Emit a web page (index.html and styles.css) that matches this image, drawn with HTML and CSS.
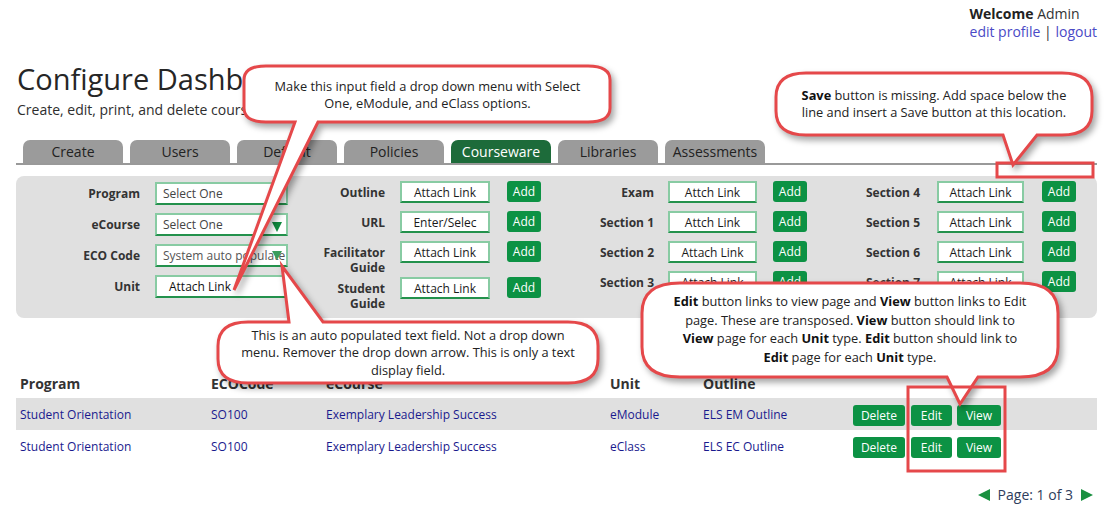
FILE: index.html
```html
<!DOCTYPE html>
<html lang="en">
<head>
<meta charset="utf-8">
<title>Configure Dashboard</title>
<link rel="stylesheet" href="styles.css">
</head>
<body>
<div class="page">
  <header class="topbar">
    <div class="welcome">
      <div><b>Welcome</b> Admin</div>
      <div><a class="toplink" href="#">edit profile</a> | <a class="toplink" href="#">logout</a></div>
    </div>
  </header>

  <h1 class="title">Configure Dashboard</h1>
  <p class="subtitle">Create, edit, print, and delete courseware.</p>

  <nav class="tabs">
    <div class="tab">Create</div>
    <div class="tab">Users</div>
    <div class="tab">Default</div>
    <div class="tab">Policies</div>
    <div class="tab active">Courseware</div>
    <div class="tab">Libraries</div>
    <div class="tab">Assessments</div>
  </nav>

  <section class="panel">
    <div class="group g1">
      <div class="lbl">Program</div>
      <div class="inp left">Select One</div>
      <div class="lbl">eCourse</div>
      <div class="inp left">Select One<span class="caret"></span></div>
      <div class="lbl">ECO Code</div>
      <div class="inp left muted">System auto populate<span class="caret light"></span></div>
      <div class="lbl">Unit</div>
      <div class="inp left unit">Attach Link</div>
    </div>

    <div class="group g2">
      <div class="lbl">Outline</div>
      <div class="inp">Attach Link</div>
      <div class="btn add">Add</div>
      <div class="lbl">URL</div>
      <div class="inp">Enter/Selec</div>
      <div class="btn add">Add</div>
      <div class="lbl">Facilitator<br>Guide</div>
      <div class="inp">Attach Link</div>
      <div class="btn add">Add</div>
      <div class="lbl">Student<br>Guide</div>
      <div class="inp">Attach Link</div>
      <div class="btn add">Add</div>
    </div>

    <div class="group g3">
      <div class="lbl">Exam</div>
      <div class="inp">Attch Link</div>
      <div class="btn add">Add</div>
      <div class="lbl">Section 1</div>
      <div class="inp">Attch Link</div>
      <div class="btn add">Add</div>
      <div class="lbl">Section 2</div>
      <div class="inp">Attach Link</div>
      <div class="btn add">Add</div>
      <div class="lbl">Section 3</div>
      <div class="inp">Attach Link</div>
      <div class="btn add">Add</div>
    </div>

    <div class="group g4">
      <div class="lbl">Section 4</div>
      <div class="inp">Attach Link</div>
      <div class="btn add">Add</div>
      <div class="lbl">Section 5</div>
      <div class="inp">Attach Link</div>
      <div class="btn add">Add</div>
      <div class="lbl">Section 6</div>
      <div class="inp">Attach Link</div>
      <div class="btn add">Add</div>
      <div class="lbl">Section 7</div>
      <div class="inp">Attach Link</div>
      <div class="btn add">Add</div>
    </div>
  </section>

  <div class="list">
    <div class="row head">
      <div>Program</div><div>ECOCode</div><div>eCourse</div><div>Unit</div><div>Outline</div><div></div>
    </div>
    <div class="row item alt">
      <a href="#">Student Orientation</a><a href="#">SO100</a><a href="#">Exemplary Leadership Success</a><a href="#">eModule</a><a href="#">ELS EM Outline</a>
      <div class="actions"><div class="btn del">Delete</div><div class="btn edit">Edit</div><div class="btn view">View</div></div>
    </div>
    <div class="row item">
      <a href="#">Student Orientation</a><a href="#">SO100</a><a href="#">Exemplary Leadership Success</a><a href="#">eClass</a><a href="#">ELS EC Outline</a>
      <div class="actions"><div class="btn del">Delete</div><div class="btn edit">Edit</div><div class="btn view">View</div></div>
    </div>
  </div>

  <div class="pager">
    <span class="tri-left"></span>
    <span>Page: 1 of 3</span>
    <span class="tri-right"></span>
  </div>
</div>

<div class="overlay">
  <svg class="marks" width="1119" height="525" viewBox="0 0 1119 525">
    <path class="bubble" d="M266,66 H588 Q610,66 610,80 V108 Q610,122 588,122 H318 L234,290 L295,122 H266 Q244,122 244,108 V80 Q244,66 266,66 Z"/>
    <path class="bubble" d="M248,322 H289 L282,266 L323,322 H568 Q598,322 598,346 V359 Q598,383 568,383 H248 Q218,383 218,359 V346 Q218,322 248,322 Z"/>
    <path class="bubble" d="M806,73 H1062 Q1092,73 1092,97 V111 Q1092,135 1062,135 H1037 L1013,165 L1003,135 H806 Q776,135 776,111 V97 Q776,73 806,73 Z"/>
    <path class="bubble" d="M680,283 H1020 Q1058,283 1058,313 V347 Q1058,377 1020,377 H978 L960,404 L947,377 H680 Q642,377 642,347 V313 Q642,283 680,283 Z"/>
    <rect class="mark" x="997" y="163" width="96" height="14"/>
    <rect class="mark" x="908" y="387" width="97" height="84"/>
  </svg>
  <div class="note n1">Make this input field a drop down menu with Select<br>One, eModule, and eClass options.</div>
  <div class="note n2">This is an auto populated text field. Not a drop down<br>menu. Remover the drop down arrow. This is only a text<br>display field.</div>
  <div class="note n3"><span><b>Save</b> button is missing. Add space below the<br>line and insert a Save button at this location.</span></div>
  <div class="note n4"><span><b>Edit</b> button links to view page and <b>View</b> button links to Edit<br>page. These are transposed. <b>View</b> button should link to<br><b>View</b> page for each <b>Unit</b> type. <b>Edit</b> button should link to<br><b>Edit</b> page for each <b>Unit</b> type.</span></div>
</div>
</body>
</html>
```

FILE: styles.css
```css
* { box-sizing: border-box; }

body {
  margin: 0;
  width: 1119px;
  height: 525px;
  overflow: hidden;
  position: relative;
  background: #fff;
  color: #333;
  font-family: "Open Sans", "Liberation Sans", sans-serif;
}

.page {
  padding: 5px 22px 0 16px;
}

/* top bar */
.topbar {
  display: flex;
  justify-content: flex-end;
}
.welcome {
  font-size: 14px;
  line-height: 18px;
  color: #333;
}
.welcome b { color: #222; }
.toplink {
  color: #4a4ac6;
  text-decoration: none;
}

.title {
  margin: 21px 0 0 1px;
  font-size: 29px;
  line-height: 34px;
  font-weight: 400;
  color: #262626;
}
.subtitle {
  margin: 4px 0 0 1px;
  font-size: 14px;
  line-height: 20px;
  color: #2e2e2e;
}

/* tabs */
.tabs {
  margin-top: 20px;
  display: flex;
  gap: 7px;
  padding-left: 7px;
  border-bottom: 2px solid #999;
}
.tab {
  width: 100px;
  height: 23px;
  line-height: 23px;
  text-align: center;
  background: #9b9b9b;
  border-radius: 7px 7px 0 0;
  font-size: 14px;
  color: #222;
}
.tab.active {
  background: #1d6b3a;
  color: #fff;
}

/* form panel */
.panel {
  margin-top: 11px;
  background: #e0e0e0;
  border-radius: 8px;
  display: flex;
  align-items: flex-start;
  padding: 5px 0 13px;
}
.group {
  display: grid;
  row-gap: 8px;
  align-items: start;
}
.g1 {
  margin-top: 1px;
  grid-template-columns: 124px 133px;
  column-gap: 15px;
}
.g2 {
  margin-left: 17px;
  grid-template-columns: 80px 15px 90px 17px 34px;
}
.g3 {
  margin-left: 33px;
  grid-template-columns: 80px 14px 89px 16px 34px;
}
.g4 {
  margin-left: 33px;
  grid-template-columns: 80px 17px 87px 18px 34px;
}
.g2 .lbl, .g3 .lbl, .g4 .lbl { grid-column: 1; }
.g2 .inp, .g3 .inp, .g4 .inp { grid-column: 3; }
.g2 .add, .g3 .add, .g4 .add { grid-column: 5; }

.lbl {
  text-align: right;
  font-size: 12px;
  font-weight: 700;
  line-height: 15px;
  padding-top: 4px;
  margin-bottom: -6px;
  color: #333;
}

.inp {
  position: relative;
  height: 22px;
  display: flex;
  align-items: center;
  justify-content: center;
  overflow: hidden;
  white-space: nowrap;
  background: #fff;
  border: 2px solid #88cba3;
  border-bottom-color: #23914c;
  font-size: 12px;
  color: #1a1a1a;
}
.g1 .inp { height: 23px; }
.inp.left {
  justify-content: flex-start;
  padding-left: 6px;
  color: #444;
}
.inp.muted { color: #555; }
.inp.unit {
  padding-left: 12px;
  color: #111;
}
.caret {
  position: absolute;
  right: 4px;
  top: 7px;
  width: 0;
  height: 0;
  border-left: 5px solid transparent;
  border-right: 5px solid transparent;
  border-top: 10px solid #0e8a3e;
}
.caret.light {
  top: 5px;
  border-top: 9px solid #3b9c5c;
}

.btn {
  height: 21px;
  line-height: 21px;
  text-align: center;
  background: #0c9244;
  color: #fff;
  border-radius: 3px;
  font-size: 12px;
}
.add { width: 34px; }

/* list */
.list {
  margin-top: 52px;
}
.row {
  display: grid;
  grid-template-columns: 191px 115px 284px 93px 150px 1fr;
  align-items: center;
  padding-left: 4px;
}
.row.head {
  height: 28px;
  padding-bottom: 2px;
  font-size: 14px;
  font-weight: 700;
  color: #333;
}
.row.item {
  height: 32px;
  font-size: 12px;
}
.row.item a {
  color: #1a1a8e;
  text-decoration: none;
}
.row.alt { background: #e0e0e0; }
.actions {
  display: flex;
  align-items: center;
  padding-top: 3px;
}
.del { width: 52px; }
.edit { width: 41px; margin-left: 6px; }
.view { width: 44px; margin-left: 5px; }

/* pager */
.pager {
  margin-top: 23px;
  display: flex;
  justify-content: flex-end;
  align-items: center;
  gap: 8px;
  padding-right: 4px;
  font-size: 14px;
  line-height: 20px;
  color: #2e3d5c;
}
.tri-left, .tri-right {
  width: 0;
  height: 0;
  border-top: 6px solid transparent;
  border-bottom: 6px solid transparent;
}
.tri-left { border-right: 12px solid #1a9040; }
.tri-right { border-left: 12px solid #1a9040; }

/* annotation overlay */
.overlay {
  position: absolute;
  left: 0;
  top: 0;
  width: 1119px;
  height: 525px;
  pointer-events: none;
}
.marks {
  position: absolute;
  left: 0;
  top: 0;
}
.bubble {
  fill: #fff;
  stroke: #e5484a;
  stroke-width: 3;
  filter: drop-shadow(3px 4px 3px rgba(0, 0, 0, 0.35));
}
.mark {
  fill: none;
  stroke: #e5484a;
  stroke-width: 3;
}
.note {
  position: absolute;
  display: flex;
  align-items: center;
  justify-content: center;
  text-align: center;
  font-size: 12.8px;
  line-height: 17.5px;
  color: #222;
  white-space: nowrap;
}
.note b { color: #111; }
.n1 { left: 245px; top: 70px; width: 365px; height: 50px; }
.n2 { left: 218px; top: 322px; width: 380px; height: 62px; }
.n3 { left: 776px; top: 73px; width: 316px; height: 62px; }
.n4 { left: 642px; top: 283px; width: 416px; height: 92px; line-height: 18.5px; }
```
